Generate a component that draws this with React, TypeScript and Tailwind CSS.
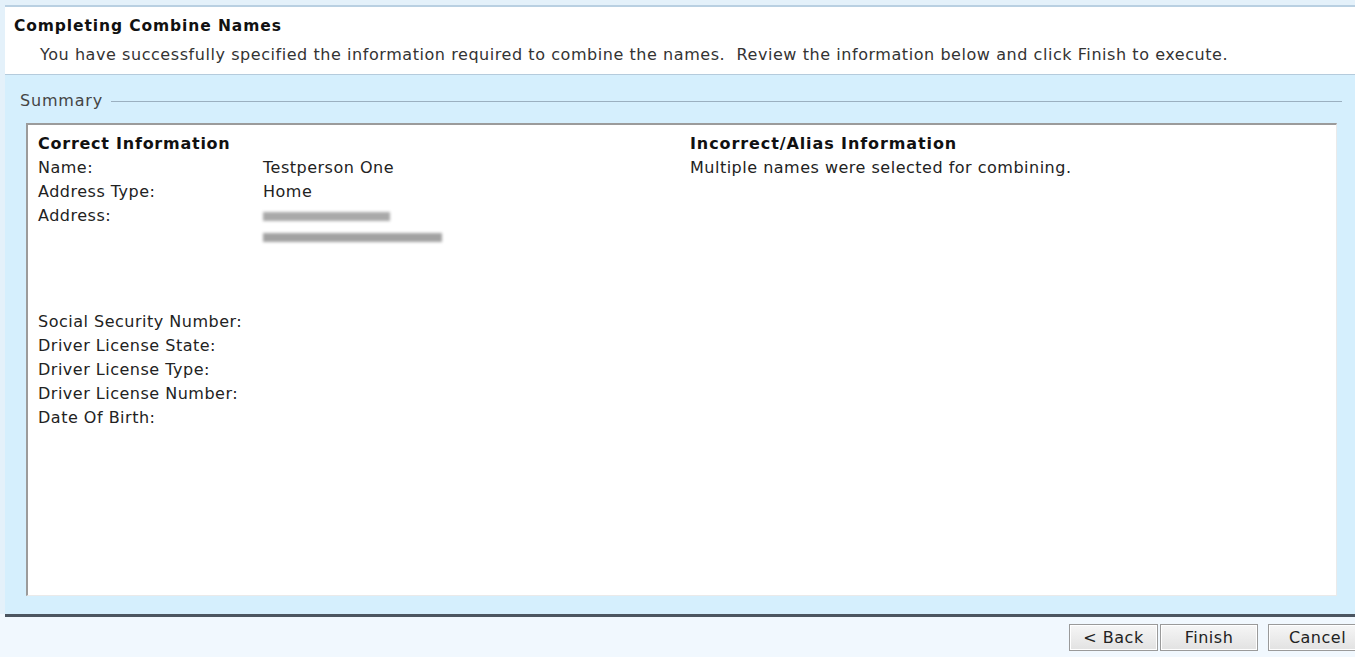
import React from 'react';

const font = { fontFamily: '"DejaVu Sans", Verdana, sans-serif' };

function Row({ label, children }: { label: string; children?: React.ReactNode }) {
  return (
    <div className="flex h-[24px] items-center">
      <div className="w-[225px] shrink-0">{label}</div>
      <div>{children}</div>
    </div>
  );
}

function WizardButton({ label, width }: { label: string; width: string }) {
  return (
    <button
      type="button"
      className={`h-[27px] ${width} shrink-0 border border-[#9a9a9a] bg-gradient-to-b from-[#f6f6f6] to-[#e2e2e2] text-[16px] tracking-[0.5px] text-[#222] shadow-[inset_0_0_0_1px_#fff]`}
    >
      {label}
    </button>
  );
}

export default function App() {
  return (
    <div className="flex h-[657px] w-[1355px] flex-col overflow-hidden bg-[#f1f8fe] text-[#222]" style={font}>
      <div className="flex flex-1 flex-col bg-[#e4f1fa] pl-[5px] pt-[5px]">
        <div className="flex flex-1 flex-col border-t-2 border-[#b9d0e2]">
          <div className="h-[68px] border-b border-[#b5cbdc] bg-white pl-[9px] pt-[9px]">
            <h1 className="text-[15.5px] font-bold leading-[20px] tracking-[0.9px] text-[#111]">Completing Combine Names</h1>
            <p className="mt-[9px] pl-[26px] text-[16px] leading-[20px] tracking-[0.56px] text-[#333]">
              You have successfully specified the information required to combine the names.&nbsp; Review the information below and click Finish to execute.
            </p>
          </div>
          <div className="flex flex-1 flex-col bg-[#d5effd] pb-[18px] pl-[21px] pr-[18px] pt-[16px]">
            <div className="flex h-[20px] items-center">
              <span className="text-[16px] tracking-[0.8px] text-[#444]" style={{ marginLeft: -6 }}>Summary</span>
              <div className="ml-[8px] h-[1px] flex-1 bg-[#9bb0c0]" style={{ marginRight: -5 }} />
            </div>
            <div className="mt-[12px] flex flex-1 border-b border-l-2 border-r border-t-2 border-[#9b9b9b] border-b-[#eaeaea] border-r-[#eaeaea] bg-white pl-[10px] pt-[7px] text-[16px] tracking-[0.5px] text-[#222]">
              <div className="w-[652px]">
                <div className="flex h-[24px] items-center font-bold tracking-[0.75px] text-[#111]">Correct Information</div>
                <Row label="Name:">Testperson One</Row>
                <Row label="Address Type:">Home</Row>
                <Row label="Address:">
                  <div className="h-[9px] w-[127px] bg-[#a9a9a9] blur-[1.5px]" />
                </Row>
                <div className="flex h-[18px] items-center pl-[225px]">
                  <div className="h-[9px] w-[179px] bg-[#a2a2a2] blur-[1.5px]" />
                </div>
                <div className="h-[64px]" />
                <Row label="Social Security Number:" />
                <Row label="Driver License State:" />
                <Row label="Driver License Type:" />
                <Row label="Driver License Number:" />
                <Row label="Date Of Birth:" />
              </div>
              <div>
                <div className="flex h-[24px] items-center font-bold tracking-[0.9px] text-[#111]">Incorrect/Alias Information</div>
                <div className="flex h-[24px] items-center">Multiple names were selected for combining.</div>
              </div>
            </div>
          </div>
        </div>
      </div>
      <div className="ml-[5px] h-[3px] bg-[#4b5560]" />
      <div className="flex h-[40px] items-center justify-end gap-[2px] pt-[1px]" style={{ marginRight: -12 }}>
        <WizardButton label="< Back" width="w-[89px]" />
        <WizardButton label="Finish" width="w-[98px]" />
        <div className="w-[6px]" />
        <WizardButton label="Cancel" width="w-[99px]" />
      </div>
    </div>
  );
}
